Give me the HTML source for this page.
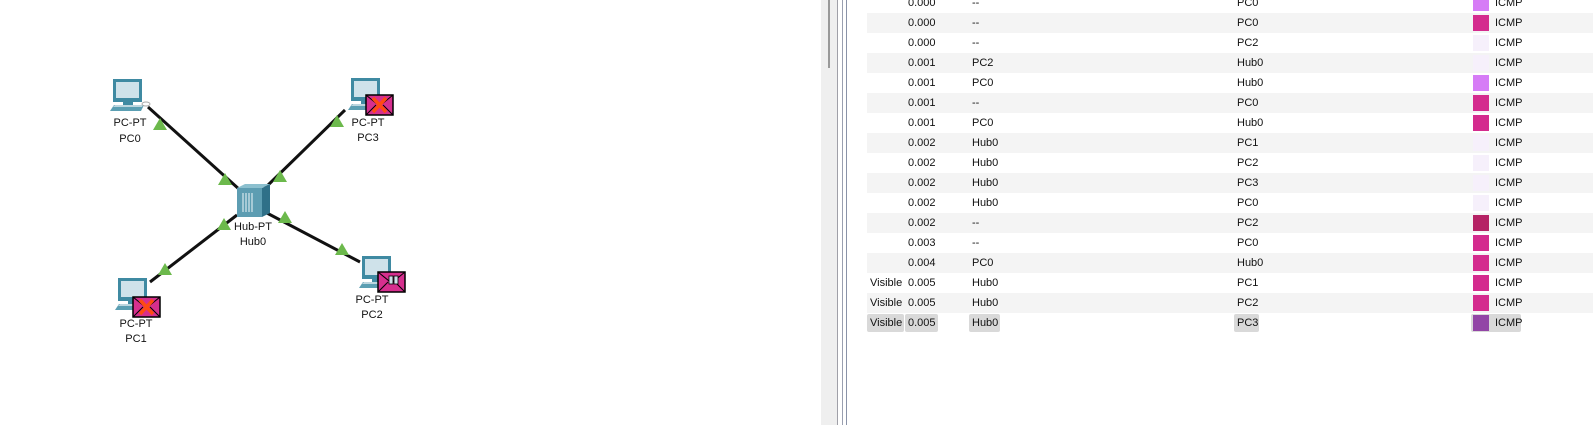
<!DOCTYPE html>
<html><head><meta charset="utf-8"><style>
html,body{margin:0;padding:0;width:1593px;height:425px;overflow:hidden;background:#fff;font-family:"Liberation Sans",Arial,sans-serif;}
.r{position:absolute;left:867px;width:726px;height:20px;font-size:11px;color:#111;}
.r.s{background:#f4f4f4}
.r span{position:absolute;top:3px;line-height:14px}
.v{left:3px}.t{left:41px}.l{left:105px}.a{left:370px}.i{left:628px}
.q{position:absolute;left:606px;top:2px;width:16px;height:16px}
.hb{position:absolute;top:1px;height:18px;background:#d9d9d9;border-radius:2px}
</style></head><body>
<svg width="810" height="425" style="position:absolute;left:0;top:0">
<defs>
<g id="pc">
<rect x="3" y="0" width="29" height="23" fill="#3f8aa2"/>
<rect x="6" y="3" width="23" height="16" fill="#cfe2ea"/>
<rect x="13" y="23" width="10" height="3" fill="#3f8aa2"/>
<polygon points="0,32 4,26 34,26 31,32" fill="#5b9fb3"/>
<polygon points="3,28 5,26 33,26 32,28" fill="#bcd6df"/>
</g>
<g id="env">
<rect x="0" y="0" width="27" height="20" fill="#d62f8e" stroke="#000" stroke-width="1.5"/>
<polyline points="0,0 13.5,11 27,0" fill="none" stroke="#000" stroke-width="1"/>
<line x1="0" y1="20" x2="10" y2="10" stroke="#000" stroke-width="1"/>
<line x1="27" y1="20" x2="17" y2="10" stroke="#000" stroke-width="1"/>
</g>
<g id="x"><line x1="7" y1="3" x2="20" y2="17" stroke="#ff4a12" stroke-width="3.5"/><line x1="20" y1="3" x2="7" y2="17" stroke="#ff4a12" stroke-width="3.5"/></g>
<polygon id="tri" points="0,-7 7,5 -7,5" fill="#6cb94c"/>
</defs>
<g stroke="#111" stroke-width="3">
<line x1="148" y1="107" x2="240" y2="190"/>
<line x1="345" y1="110" x2="265" y2="188"/>
<line x1="150" y1="282" x2="237" y2="215"/>
<line x1="265" y1="212" x2="360" y2="262"/>
</g>
<use href="#pc" x="110" y="79"/>
<ellipse cx="146" cy="104" rx="4" ry="2" fill="none" stroke="#aaa"/>
<use href="#pc" x="348" y="78"/>
<use href="#pc" x="115" y="278"/>
<use href="#pc" x="359" y="256"/>
<use href="#env" x="366" y="95"/><use href="#x" x="366" y="95"/>
<use href="#env" x="133" y="297"/><use href="#x" x="133" y="297"/>
<use href="#env" x="378" y="272"/>
<rect x="389" y="276" width="4" height="8" fill="#cfe2ea" stroke="#000" stroke-width=".8"/><rect x="394" y="276" width="4" height="8" fill="#cfe2ea" stroke="#000" stroke-width=".8"/>
<rect x="237" y="188" width="25" height="29" fill="#5d9db2"/>
<polygon points="262,188 270,184 270,213 262,217" fill="#2f7088"/>
<polygon points="237,188 245,184 270,184 262,188" fill="#8cc0cf"/>
<g stroke="#d6e8ee" stroke-width="1.2"><line x1="243" y1="193" x2="243" y2="212"/><line x1="246" y1="193" x2="246" y2="212"/><line x1="249" y1="193" x2="249" y2="212"/><line x1="252" y1="193" x2="252" y2="212"/></g>
<use href="#tri" x="160" y="125"/><use href="#tri" x="225" y="180"/>
<use href="#tri" x="337" y="122"/><use href="#tri" x="280" y="177"/>
<use href="#tri" x="165" y="270"/><use href="#tri" x="224" y="225"/>
<use href="#tri" x="285" y="218"/><use href="#tri" x="342" y="250"/>
<g font-size="11" fill="#111" text-anchor="middle" font-family="Liberation Sans,Arial,sans-serif">
<text x="130" y="126">PC-PT</text><text x="130" y="142">PC0</text>
<text x="368" y="126">PC-PT</text><text x="368" y="141">PC3</text>
<text x="136" y="327">PC-PT</text><text x="136" y="342">PC1</text>
<text x="372" y="303">PC-PT</text><text x="372" y="318">PC2</text>
<text x="253" y="230">Hub-PT</text><text x="253" y="245">Hub0</text>
</g>
</svg>
<div style="position:absolute;left:821px;top:0;width:16px;height:425px;background:#efefef"></div>
<div style="position:absolute;left:828px;top:0;width:2px;height:68px;background:#999"></div>
<div style="position:absolute;left:837px;top:0;width:1px;height:425px;background:#a0a0a8"></div>
<div style="position:absolute;left:842px;top:0;width:1px;height:425px;background:#9aa0b0"></div>
<div style="position:absolute;left:846px;top:0;width:1px;height:425px;background:#8a93a8"></div>

<div class="r" style="top:-7px"><span class="t">0.000</span><span class="l">--</span><span class="a">PC0</span><div class="q" style="background:#d67cf6"></div><span class="i">ICMP</span></div>
<div class="r s" style="top:13px"><span class="t">0.000</span><span class="l">--</span><span class="a">PC0</span><div class="q" style="background:#d42b8e"></div><span class="i">ICMP</span></div>
<div class="r" style="top:33px"><span class="t">0.000</span><span class="l">--</span><span class="a">PC2</span><div class="q" style="background:#f6f0fb"></div><span class="i">ICMP</span></div>
<div class="r s" style="top:53px"><span class="t">0.001</span><span class="l">PC2</span><span class="a">Hub0</span><div class="q" style="background:#f6f0fb"></div><span class="i">ICMP</span></div>
<div class="r" style="top:73px"><span class="t">0.001</span><span class="l">PC0</span><span class="a">Hub0</span><div class="q" style="background:#d67cf6"></div><span class="i">ICMP</span></div>
<div class="r s" style="top:93px"><span class="t">0.001</span><span class="l">--</span><span class="a">PC0</span><div class="q" style="background:#d42b8e"></div><span class="i">ICMP</span></div>
<div class="r" style="top:113px"><span class="t">0.001</span><span class="l">PC0</span><span class="a">Hub0</span><div class="q" style="background:#d42b8e"></div><span class="i">ICMP</span></div>
<div class="r s" style="top:133px"><span class="t">0.002</span><span class="l">Hub0</span><span class="a">PC1</span><div class="q" style="background:#f6f0fb"></div><span class="i">ICMP</span></div>
<div class="r" style="top:153px"><span class="t">0.002</span><span class="l">Hub0</span><span class="a">PC2</span><div class="q" style="background:#f6f0fb"></div><span class="i">ICMP</span></div>
<div class="r s" style="top:173px"><span class="t">0.002</span><span class="l">Hub0</span><span class="a">PC3</span><div class="q" style="background:#f6f0fb"></div><span class="i">ICMP</span></div>
<div class="r" style="top:193px"><span class="t">0.002</span><span class="l">Hub0</span><span class="a">PC0</span><div class="q" style="background:#f6f0fb"></div><span class="i">ICMP</span></div>
<div class="r s" style="top:213px"><span class="t">0.002</span><span class="l">--</span><span class="a">PC2</span><div class="q" style="background:#b52265"></div><span class="i">ICMP</span></div>
<div class="r" style="top:233px"><span class="t">0.003</span><span class="l">--</span><span class="a">PC0</span><div class="q" style="background:#d42b8e"></div><span class="i">ICMP</span></div>
<div class="r s" style="top:253px"><span class="t">0.004</span><span class="l">PC0</span><span class="a">Hub0</span><div class="q" style="background:#d42b8e"></div><span class="i">ICMP</span></div>
<div class="r" style="top:273px"><span class="v">Visible</span><span class="t">0.005</span><span class="l">Hub0</span><span class="a">PC1</span><div class="q" style="background:#d42b8e"></div><span class="i">ICMP</span></div>
<div class="r s" style="top:293px"><span class="v">Visible</span><span class="t">0.005</span><span class="l">Hub0</span><span class="a">PC2</span><div class="q" style="background:#d42b8e"></div><span class="i">ICMP</span></div>
<div class="r" style="top:313px">
<div class="hb" style="left:0;width:37px"></div><div class="hb" style="left:38px;width:33px"></div><div class="hb" style="left:102px;width:31px"></div><div class="hb" style="left:367px;width:25px"></div><div class="hb" style="left:604px;width:50px"></div>
<span class="v">Visible</span><span class="t">0.005</span><span class="l">Hub0</span><span class="a">PC3</span><div class="q" style="background:#9245a6"></div><span class="i">ICMP</span></div>
</body></html>
